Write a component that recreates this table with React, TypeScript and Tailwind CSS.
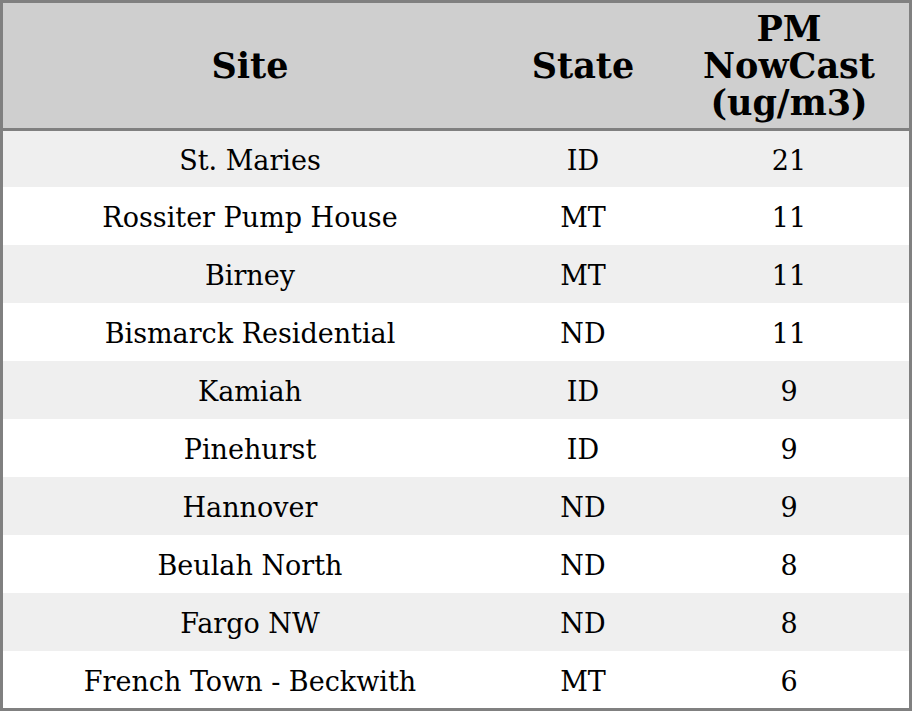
import * as React from "react";

const rows: [string, string, string][] = [
  ["St. Maries", "ID", "21"],
  ["Rossiter Pump House", "MT", "11"],
  ["Birney", "MT", "11"],
  ["Bismarck Residential", "ND", "11"],
  ["Kamiah", "ID", "9"],
  ["Pinehurst", "ID", "9"],
  ["Hannover", "ND", "9"],
  ["Beulah North", "ND", "8"],
  ["Fargo NW", "ND", "8"],
  ["French Town - Beckwith", "MT", "6"],
];

export default function App() {
  return (
    <div
      className="w-[912px] h-[711px] bg-white border-[3px] border-[#808080] overflow-hidden"
      style={{ fontFamily: '"DejaVu Serif", serif' }}
    >
      <table className="w-full border-separate border-spacing-0 text-black text-center">
        <colgroup>
          <col className="w-[494px]" />
          <col className="w-[172px]" />
          <col />
        </colgroup>
        <thead>
          <tr className="bg-[#cfcfcf]">
            <th className="h-[128px] border-b-[3px] border-[#808080] text-[35px] font-bold leading-[37px]">
              Site
            </th>
            <th className="h-[128px] border-b-[3px] border-[#808080] text-[35px] font-bold leading-[37px]">
              State
            </th>
            <th className="h-[128px] border-b-[3px] border-[#808080] text-[35px] font-bold leading-[37px]">
              PM
              <br />
              NowCast
              <br />
              (ug/m3)
            </th>
          </tr>
        </thead>
        <tbody>
          {rows.map(([site, state, pm], i) => (
            <tr
              key={site}
              className={i % 2 === 0 ? "bg-[#efefef]" : "bg-white"}
            >
              <td className={`${i === 0 ? "h-[56px]" : "h-[58px]"} text-[27px] leading-none pt-[2px]`}>{site}</td>
              <td className={`${i === 0 ? "h-[56px]" : "h-[58px]"} text-[27px] leading-none pt-[2px]`}>{state}</td>
              <td className={`${i === 0 ? "h-[56px]" : "h-[58px]"} text-[27px] leading-none pt-[2px]`}>{pm}</td>
            </tr>
          ))}
        </tbody>
      </table>
    </div>
  );
}
